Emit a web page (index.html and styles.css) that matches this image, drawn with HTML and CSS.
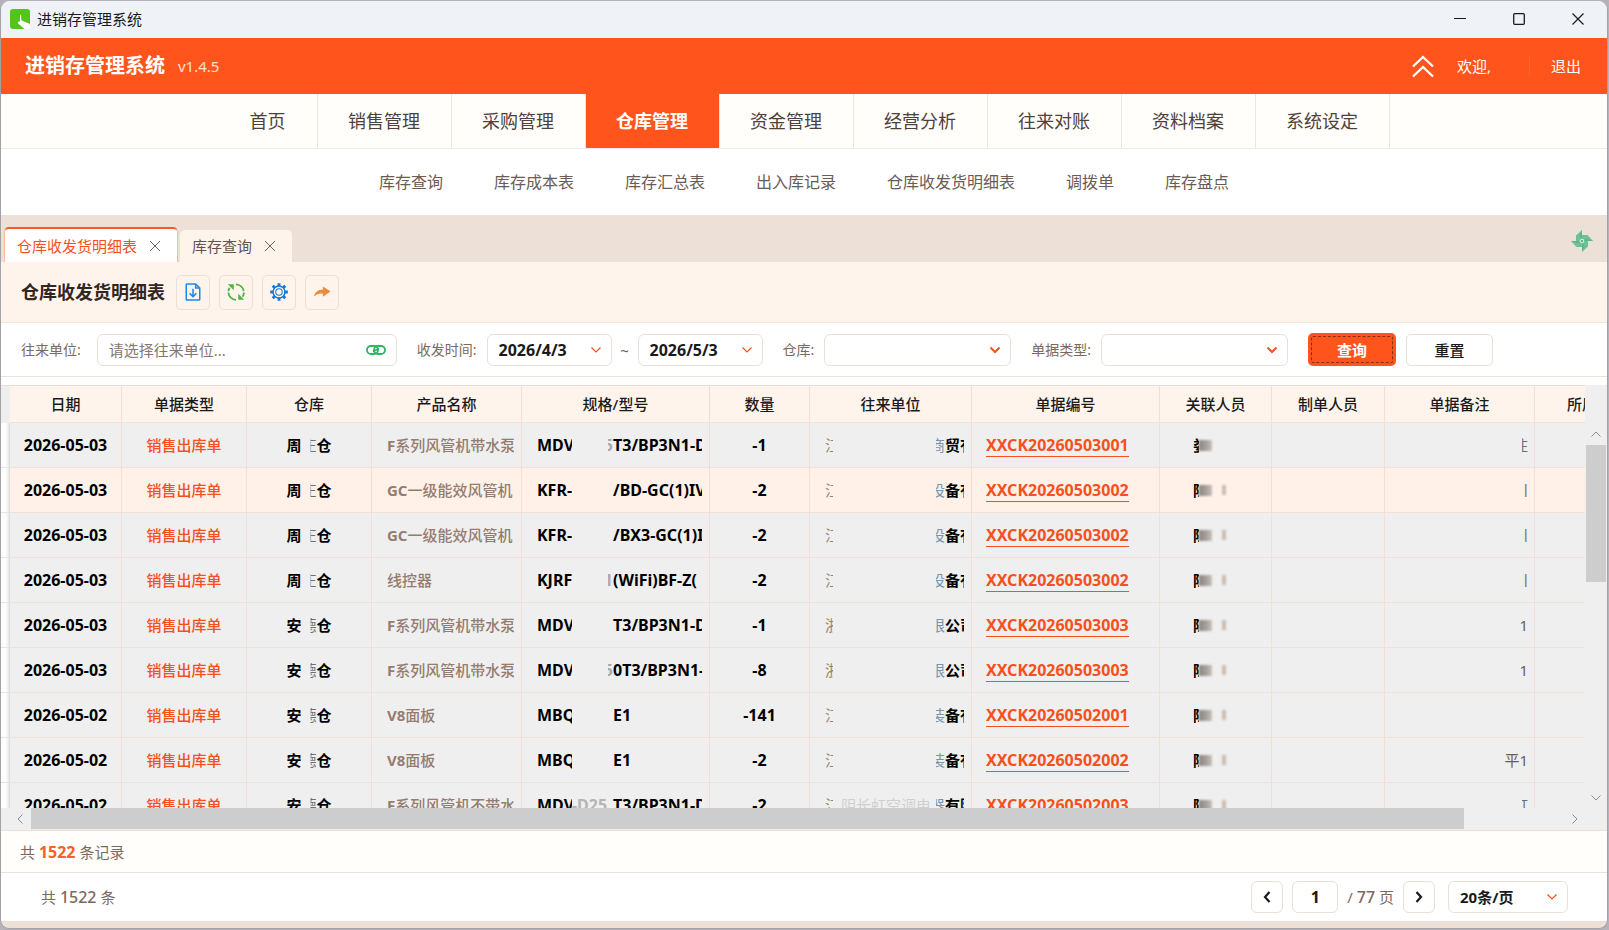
FILE: index.html
```html
<!DOCTYPE html>
<html lang="zh-CN">
<head>
    <meta charset="UTF-8">
    <meta name="viewport" content="width=device-width, initial-scale=1.0">
    <title>进销存管理系统</title>
    <link rel="stylesheet" href="styles.css">
</head>
<body>
    <!-- 公用箭头 -->
    <svg class="sprite" aria-hidden="true">
        <symbol id="arrow-down" viewBox="0 0 12 8"><path d="M1.5 1.5 6 6l4.500-4.500" fill="none" stroke="currentColor"/></symbol>
        <symbol id="close" viewBox="0 0 12 12"><path d="M1 1l10 10M11 1 1 11" fill="none" stroke="currentColor"/></symbol>
    </svg>
    <div class="window">
        <div class="title-bar">
            <svg class="app-icon" viewBox="0 0 20 20">
                <rect width="20" height="20" rx="3" fill="#52c41a"/>
                <path d="M10 6c.6-.5 1.200 0 1.200.6V11l1.600 1 5.500 2.200c1 .4 1.700 1 1.700 2V20h-5.500l-5-4.200c-1.300-.9-2-2.300-1.200-3 .5-.4 1.200-.2 1.700.2z" fill="#fff"/>
            </svg>
            <span class="app-name">进销存管理系统</span>
            <div class="window-btns">
                <button type="button" aria-label="最小化"><svg viewBox="0 0 12 12"><path d="M0 5.500h12" stroke="currentColor"/></svg></button>
                <button type="button" aria-label="最大化"><svg viewBox="0 0 12 12"><rect x=".7" y=".7" width="10.600" height="10.600" rx="1" fill="none" stroke="currentColor" stroke-width="1.300"/></svg></button>
                <button type="button" aria-label="关闭"><svg viewBox="0 0 12 12"><path d="M.5.5l11 11M11.500.5l-11 11" stroke="currentColor" stroke-width="1.200"/></svg></button>
            </div>
        </div>

        <header class="header">
            <h1 class="logo">进销存管理系统</h1>
            <span class="version">v1.4.5</span>
            <div class="user">
                <button type="button" class="collapse" aria-label="收起菜单">
                    <svg viewBox="0 0 22 23"><path d="M1 11.500 11 2l10 9.500M1 21.500 11 12l10 9.500" fill="none" stroke="#fff" stroke-width="2.300"/></svg>
                </button>
                <span class="welcome">欢迎,</span>
                <a class="logout" href="#">退出</a>
            </div>
        </header>

        <nav class="nav">
            <a class="home" href="#">首页</a>
            <a href="#">销售管理</a>
            <a href="#">采购管理</a>
            <a class="active" href="#">仓库管理</a>
            <a href="#">资金管理</a>
            <a href="#">经营分析</a>
            <a href="#">往来对账</a>
            <a href="#">资料档案</a>
            <a href="#">系统设定</a>
        </nav>
        <nav class="sub-nav">
            <a href="#">库存查询</a>
            <a href="#">库存成本表</a>
            <a href="#">库存汇总表</a>
            <a href="#">出入库记录</a>
            <a href="#">仓库收发货明细表</a>
            <a href="#">调拨单</a>
            <a href="#">库存盘点</a>
        </nav>

        <div class="tabs">
            <div class="tab active">
                <span>仓库收发货明细表</span>
                <button type="button" aria-label="关闭"><svg><use href="#close"/></svg></button>
            </div>
            <div class="tab">
                <span>库存查询</span>
                <button type="button" aria-label="关闭"><svg><use href="#close"/></svg></button>
            </div>
            <svg class="pinwheel" viewBox="0 0 22 22">
                <g fill="#6fc094">
                    <path d="M11 11V0L5 5.500V11z"/>
                    <path d="M11 11h11l-5.500-6H11z"/>
                    <path d="M11 11v11l6-5.500V11z"/>
                    <path d="M11 11H0l5.500 6H11z"/>
                </g>
                <g fill="#5cb887">
                    <path d="M11 11V0L8.500 6z"/>
                    <path d="M11 11h11l-6-2.500z"/>
                    <path d="M11 11v11l2.500-6z"/>
                    <path d="M11 11H0l6 2.500z"/>
                </g>
                <circle cx="11" cy="11" r="1.800" fill="#57b383" stroke="#e6f3ea"/>
            </svg>
        </div>

        <div class="toolbar">
            <h2>仓库收发货明细表</h2>
            <button type="button" aria-label="导出">
                <svg viewBox="0 0 20 20" fill="none" stroke="#1e88e5" stroke-width="1.700"><path d="M3.500 1H13l4.500 4.500V18a1 1 0 0 1-1 1h-13a1 1 0 0 1-1-1V2a1 1 0 0 1 1-1z"/><path d="M13 1v4.500h4.500M10 6.500v8.500M6.300 11.500 10 15.200l3.700-3.700"/></svg>
            </button>
            <button type="button" aria-label="刷新">
                <svg viewBox="0 0 20 20" fill="none" stroke="#4bb543" stroke-width="2"><path d="M10 1.500c4.500.2 8 3.200 8.600 7.500M18.800 10.500c0 1.800-.6 3.400-1.600 4.800M10 18.800C5.500 18.500 1.800 15 1.500 10.500M1.500 9c.2-1.300.7-2.500 1.500-3.600"/><path d="M1 1.500h6.500V8zM19 18.500h-6.500V12z" fill="#4bb543" stroke="none"/></svg>
            </button>
            <button type="button" aria-label="设置">
                <svg viewBox="0 0 20 20" fill="none" stroke="#1976d2"><circle cx="10" cy="10" r="6.600" stroke-width="1.600"/><circle cx="10" cy="10" r="3.600" stroke-width="1.200"/><path d="M10 .2V3.500M10 16.500v3.300M.2 10h3.300M16.500 10h3.300M3 3l2.300 2.300M14.700 14.700 17 17M3 17l2.300-2.300M14.700 5.300 17 3" stroke-width="3.200"/></svg>
            </button>
            <button type="button" aria-label="转到">
                <svg viewBox="0 0 20 20"><path d="M1 15c1.500-5.500 5-7.500 10-7.500V3.800L19.500 9.500 11 15.200v-3.400C7 11.300 4 12.500 1 15z" fill="#e98b3d"/></svg>
            </button>
        </div>

        <form class="filter">
            <label class="wide-label" for="unit">往来单位:</label>
            <div class="field field-unit">
                <input type="text" id="unit" placeholder="请选择往来单位...">
                <svg class="link-icon" viewBox="0 0 20 10" fill="none" stroke="#27b862" stroke-width="1.800"><rect x="1" y="1" width="11" height="8" rx="4"/><rect x="8" y="1" width="11" height="8" rx="4"/><path d="M7 6.500l6-3"/></svg>
            </div>
            <label for="date-from">收发时间:</label>
            <div class="field field-date">
                <input class="num" type="text" id="date-from" value="2026/4/3">
                <svg class="arrow"><use href="#arrow-down"/></svg>
            </div>
            <span class="tilde">~</span>
            <div class="field field-date">
                <input class="num" type="text" id="date-to" aria-label="结束时间" value="2026/5/3">
                <svg class="arrow"><use href="#arrow-down"/></svg>
            </div>
            <label for="store">仓库:</label>
            <div class="field field-select">
                <select id="store"><option></option></select>
                <svg class="arrow bold"><use href="#arrow-down"/></svg>
            </div>
            <label for="type">单据类型:</label>
            <div class="field field-select">
                <select id="type"><option></option></select>
                <svg class="arrow bold"><use href="#arrow-down"/></svg>
            </div>
            <button type="button" class="btn btn-primary">查询</button>
            <button type="reset" class="btn">重置</button>
        </form>

        <div class="grid">
            <div class="grid-view">
                <table>
                    <colgroup>
                        <col class="w-gutter"><col class="w-112"><col class="w-125"><col class="w-125"><col class="w-150"><col class="w-188"><col class="w-100"><col class="w-162"><col class="w-188"><col class="w-112"><col class="w-113"><col class="w-150"><col class="w-125">
                    </colgroup>
                    <thead>
                        <tr><td class="gutter"></td><th>日期</th><th>单据类型</th><th>仓库</th><th>产品名称</th><th>规格/型号</th><th>数量</th><th>往来单位</th><th>单据编号</th><th>关联人员</th><th>制单人员</th><th>单据备注</th><th>所属部门</th></tr>
                    </thead>
                    <tbody>
                        <tr>
                            <td class="gutter"></td><td class="num">2026-05-03</td><td class="type">销售出库单</td><td class="store">周<i>庄</i>仓</td>
                            <td class="name"><div class="clip"><b>F</b>系列风管机带水泵</div></td>
                            <td class="num"><div class="clip model"><span>MDV</span><i></i><em>5</em>T3/BP3N1-D</div></td>
                            <td class="num">-1</td>
                            <td class="store"><div class="clip unit"><span>江</span><i></i><em>商</em>贸有</div></td>
                            <td class="num doc"><a href="#">XXCK20260503001</a></td>
                            <td><div class="person"><span>娄</span><i></i></div></td><td></td><td class="remark"><i>住</i></td><td></td>
                        </tr>
                        <tr class="selected">
                            <td class="gutter"></td><td class="num">2026-05-03</td><td class="type">销售出库单</td><td class="store">周<i>庄</i>仓</td>
                            <td class="name"><div class="clip"><b>GC</b>一级能效风管机</div></td>
                            <td class="num"><div class="clip model"><span>KFR-</span><i></i><em></em>/BD-GC(1)IV</div></td>
                            <td class="num">-2</td>
                            <td class="store"><div class="clip unit"><span>江</span><i></i><em>设</em>备有</div></td>
                            <td class="num doc"><a href="#">XXCK20260503002</a></td>
                            <td><div class="person"><span>陈</span><i></i><b></b></div></td><td></td><td class="remark"><i>川</i></td><td></td>
                        </tr>
                        <tr>
                            <td class="gutter"></td><td class="num">2026-05-03</td><td class="type">销售出库单</td><td class="store">周<i>庄</i>仓</td>
                            <td class="name"><div class="clip"><b>GC</b>一级能效风管机</div></td>
                            <td class="num"><div class="clip model"><span>KFR-</span><i></i><em></em>/BX3-GC(1)IV</div></td>
                            <td class="num">-2</td>
                            <td class="store"><div class="clip unit"><span>江</span><i></i><em>设</em>备有</div></td>
                            <td class="num doc"><a href="#">XXCK20260503002</a></td>
                            <td><div class="person"><span>陈</span><i></i><b></b></div></td><td></td><td class="remark"><i>川</i></td><td></td>
                        </tr>
                        <tr>
                            <td class="gutter"></td><td class="num">2026-05-03</td><td class="type">销售出库单</td><td class="store">周<i>庄</i>仓</td>
                            <td class="name"><div class="clip">线控器</div></td>
                            <td class="num"><div class="clip model"><span>KJRF</span><i></i><em>1</em>(WiFi)BF-Z(</div></td>
                            <td class="num">-2</td>
                            <td class="store"><div class="clip unit"><span>江</span><i></i><em>设</em>备有</div></td>
                            <td class="num doc"><a href="#">XXCK20260503002</a></td>
                            <td><div class="person"><span>陈</span><i></i><b></b></div></td><td></td><td class="remark"><i>川</i></td><td></td>
                        </tr>
                        <tr>
                            <td class="gutter"></td><td class="num">2026-05-03</td><td class="type">销售出库单</td><td class="store">安<i>德</i>仓</td>
                            <td class="name"><div class="clip"><b>F</b>系列风管机带水泵</div></td>
                            <td class="num"><div class="clip model"><span>MDV</span><i></i><em></em>T3/BP3N1-D</div></td>
                            <td class="num">-1</td>
                            <td class="store"><div class="clip unit"><span>浙</span><i></i><em>限</em>公司</div></td>
                            <td class="num doc"><a href="#">XXCK20260503003</a></td>
                            <td><div class="person"><span>陈</span><i></i><b></b></div></td><td></td><td class="remark">1</td><td></td>
                        </tr>
                        <tr>
                            <td class="gutter"></td><td class="num">2026-05-03</td><td class="type">销售出库单</td><td class="store">安<i>德</i>仓</td>
                            <td class="name"><div class="clip"><b>F</b>系列风管机带水泵</div></td>
                            <td class="num"><div class="clip model"><span>MDV</span><i></i><em>5</em>0T3/BP3N1-</div></td>
                            <td class="num">-8</td>
                            <td class="store"><div class="clip unit"><span>浙</span><i></i><em>限</em>公司</div></td>
                            <td class="num doc"><a href="#">XXCK20260503003</a></td>
                            <td><div class="person"><span>陈</span><i></i><b></b></div></td><td></td><td class="remark">1</td><td></td>
                        </tr>
                        <tr>
                            <td class="gutter"></td><td class="num">2026-05-02</td><td class="type">销售出库单</td><td class="store">安<i>德</i>仓</td>
                            <td class="name"><div class="clip"><b>V8</b>面板</div></td>
                            <td class="num"><div class="clip model"><span>MBQ</span><i></i><em></em>E1</div></td>
                            <td class="num">-141</td>
                            <td class="store"><div class="clip unit"><span>江</span><i></i><em>装</em>备有</div></td>
                            <td class="num doc"><a href="#">XXCK20260502001</a></td>
                            <td><div class="person"><span>陈</span><i></i><b></b></div></td><td></td><td class="remark"></td><td></td>
                        </tr>
                        <tr>
                            <td class="gutter"></td><td class="num">2026-05-02</td><td class="type">销售出库单</td><td class="store">安<i>德</i>仓</td>
                            <td class="name"><div class="clip"><b>V8</b>面板</div></td>
                            <td class="num"><div class="clip model"><span>MBQ</span><i></i><em></em>E1</div></td>
                            <td class="num">-2</td>
                            <td class="store"><div class="clip unit"><span>江</span><i></i><em>装</em>备有</div></td>
                            <td class="num doc"><a href="#">XXCK20260502002</a></td>
                            <td><div class="person"><span>陈</span><i></i><b></b></div></td><td></td><td class="remark">平1</td><td></td>
                        </tr>
                        <tr>
                            <td class="gutter"></td><td class="num">2026-05-02</td><td class="type">销售出库单</td><td class="store">安<i>德</i>仓</td>
                            <td class="name"><div class="clip"><b>F</b>系列风管机不带水</div></td>
                            <td class="num"><div class="clip model"><span>MDV</span><i>-D25</i><em></em>T3/BP3N1-D</div></td>
                            <td class="num">-2</td>
                            <td class="store"><div class="clip unit"><span>江</span><i>阴长虹空调电</i><em>器</em>有限</div></td>
                            <td class="num doc"><a href="#">XXCK20260502003</a></td>
                            <td><div class="person"><span>陈</span><i></i><b></b></div></td><td></td><td class="remark"><i>订</i></td><td></td>
                        </tr>
                    </tbody>
                </table>
            </div>
            <div class="scroll-y">
                <svg class="up"><use href="#arrow-down"/></svg>
                <div class="thumb"></div>
                <svg class="down"><use href="#arrow-down"/></svg>
            </div>
            <div class="scroll-x">
                <svg class="left"><use href="#arrow-down"/></svg>
                <div class="track"><div class="thumb"></div></div>
                <svg class="right"><use href="#arrow-down"/></svg>
            </div>
        </div>

        <div class="records">共 <b>1522</b> 条记录</div>

        <div class="pager">
            <span class="total">共 <span>1522</span> 条</span>
            <button type="button" aria-label="上一页"><svg viewBox="0 0 8 12"><path d="M6.500 1 2 6l4.500 5" fill="none" stroke="currentColor" stroke-width="2.200"/></svg></button>
            <input class="num" type="text" value="1" aria-label="页码">
            <span class="pages">/ <span>77</span> 页</span>
            <button type="button" aria-label="下一页"><svg viewBox="0 0 8 12"><path d="M1.500 1 6 6l-4.500 5" fill="none" stroke="currentColor" stroke-width="2.200"/></svg></button>
            <div class="field field-size">
                <select aria-label="每页条数"><option>20条/页</option></select>
                <svg class="arrow"><use href="#arrow-down"/></svg>
            </div>
        </div>
    </div>
</body>
</html>
```
FILE: styles.css
```css
* {
    box-sizing: border-box;
}
body {
    margin: 0;
    height: 100vh;
    padding: 1px 1px 1px 0;
    background: #b5b2ba;
    font: 15px/20px "Noto Sans", "Noto Sans CJK SC", sans-serif;
    color: #1a1a1a;
    overflow: hidden;
}
a {
    color: inherit;
    text-decoration: none;
}
button,
input,
select {
    font: inherit;
    color: inherit;
    margin: 0;
    padding: 0;
}
button {
    border: 0;
    background: none;
    cursor: pointer;
}
.sprite {
    display: none;
}
.window {
    height: 100%;
    display: flex;
    flex-direction: column;
    border: 1px solid #a3a1a8;
    border-top: 0;
    border-radius: 9px;
    background: #ede0d6;
    padding-bottom: 7px;
    overflow: hidden;
}

/* 窗口标题栏 */
.title-bar {
    flex: none;
    height: 37px;
    display: flex;
    align-items: center;
    padding: 0 0 1px 9px;
    background: #eff3f8;
}
.app-icon {
    width: 20px;
    height: 20px;
    margin-right: 7px;
}
.window-btns {
    margin-left: auto;
    display: flex;
}
.window-btns button {
    width: 59px;
    height: 36px;
}
.window-btns svg {
    width: 12px;
    height: 12px;
    display: block;
    margin: 0 auto;
}

/* 顶部 */
.header {
    flex: none;
    height: 56px;
    display: flex;
    align-items: center;
    padding: 0 26px 0 24px;
    background: #ff551d;
    color: #fff;
}
.logo {
    margin: 0 13px 0 0;
    font-size: 20px;
    line-height: 26px;
}
.version {
    color: #ffe0d4;
}
.user {
    margin-left: auto;
    display: flex;
    align-items: center;
}
.collapse svg {
    width: 22px;
    height: 23px;
    display: block;
}
.welcome {
    margin-left: 23px;
    padding-right: 38px;
    border-right: 1px solid #f7642f;
}
.logout {
    margin-left: 21px;
}

/* 菜单 */
.nav {
    flex: none;
    height: 55px;
    display: flex;
    justify-content: center;
    background: #fffefa;
    border-bottom: 1px solid #efebe8;
    font-size: 18px;
    line-height: 54px;
    color: #4f4039;
}
.nav a {
    width: 134px;
    text-align: center;
    border-right: 1px solid #ede5de;
}
.nav .home {
    width: 99px;
}
.nav .active {
    background: #ff551d;
    color: #fff;
    font-weight: bold;
}
.sub-nav {
    flex: none;
    height: 66px;
    display: flex;
    justify-content: center;
    gap: 51px;
    background: #fff;
    font-size: 16px;
    line-height: 66px;
    color: #6b5b54;
}

/* 页签 */
.tabs {
    flex: none;
    height: 47px;
    display: flex;
    align-items: flex-end;
    gap: 2px;
    padding-left: 3px;
    color: #65544b;
}
.tab {
    height: 32px;
    display: flex;
    align-items: center;
    gap: 12px;
    padding: 0 16px 0 12px;
    background: #fff4ec;
    border-radius: 5px 5px 0 0;
}
.tab.active {
    height: 35px;
    background: #fff;
    border: 1px solid #fbb9a0;
    border-top: 2px solid #ff5a24;
    border-bottom: 0;
    color: #f4511e;
}
.tab button {
    width: 12px;
    height: 12px;
    color: #6b625e;
}
.tab svg {
    width: 12px;
    height: 12px;
    display: block;
}
.pinwheel {
    width: 22px;
    height: 22px;
    margin: 0 14px 10px auto;
}

/* 工具栏 */
.toolbar {
    flex: none;
    height: 61px;
    display: flex;
    align-items: center;
    gap: 9px;
    padding-left: 20px;
    background: #fff4ec;
    border-bottom: 1px solid #f0e6de;
}
.toolbar h2 {
    margin: 0 2px 0 0;
    font-size: 18px;
    line-height: 24px;
    color: #33261f;
}
.toolbar button {
    width: 34px;
    height: 35px;
    border: 1px solid #eedfd5;
    border-radius: 5px;
}
.toolbar svg {
    width: 18px;
    height: 20px;
    display: block;
    margin: 0 auto;
}

/* 查询条件 */
.filter {
    flex: none;
    height: 54px;
    display: flex;
    align-items: center;
    padding-left: 20px;
    background: #fff;
    border-bottom: 1px solid #eae3dd;
}
.filter label {
    flex: none;
    font-size: 14px;
    color: #7c695e;
    margin-right: 10px;
}
.filter .wide-label {
    margin-right: 16px;
}
.field {
    position: relative;
    height: 32px;
    margin-right: 20px;
}
.field input,
.field select {
    width: 100%;
    height: 32px;
    padding: 0 11px;
    border: 1px solid #e8e0da;
    border-radius: 6px;
    background: #fff;
    appearance: none;
    outline: none;
}
.field-unit {
    width: 300px;
}
.field-unit input::placeholder {
    color: #85776f;
    opacity: 1;
}
.link-icon {
    position: absolute;
    right: 11px;
    top: 11px;
    width: 20px;
    height: 10px;
}
.field-date {
    width: 125px;
}
.field-select {
    width: 187px;
}
.arrow {
    position: absolute;
    right: 10px;
    top: 12px;
    width: 12px;
    height: 8px;
    color: #f4511e;
    stroke-width: 1.2;
    pointer-events: none;
}
.arrow.bold {
    stroke-width: 2;
}
.tilde {
    width: 26px;
    margin-left: -20px;
    text-align: center;
    color: #6b5b54;
}
.num {
    font-size: 16px;
    font-weight: bold;
}
.btn {
    width: 87px;
    height: 32px;
    border: 1px solid #e8e0da;
    border-radius: 5px;
    background: #fff;
    font-weight: 500;
}
.btn-primary {
    width: 88px;
    height: 33px;
    margin-right: 10px;
    border: 0;
    background: #ff551d;
    color: #fff;
    font-weight: bold;
    outline: 1px dashed #8a2a0a;
    outline-offset: -4px;
}

/* 表格 */
.grid {
    flex: 1;
    min-height: 0;
    display: grid;
    grid-template-columns: minmax(0, 1fr) 22px;
    grid-template-rows: minmax(0, 1fr) 22px;
    border-top: 8px solid #fff;
    background: #efefef;
}
.grid-view {
    overflow: hidden;
    border-top: 1px solid #e6ddd7;
}
table {
    width: 1659px;
    table-layout: fixed;
    border-collapse: separate;
    border-spacing: 0;
}
.w-gutter {
    width: 9px;
}
.w-100 {
    width: 100px;
}
.w-112 {
    width: 112px;
}
.w-113 {
    width: 113px;
}
.w-125 {
    width: 125px;
}
.w-150 {
    width: 150px;
}
.w-162 {
    width: 162px;
}
.w-188 {
    width: 188px;
}
th,
td {
    padding: 0;
    text-align: center;
    white-space: nowrap;
    border-right: 1px solid #f3dfd2;
    border-bottom: 1px solid #f1e2d9;
}
th {
    height: 37px;
    background: #fff4ec;
    font-weight: 500;
}
td {
    height: 45px;
    background: #efefef;
    color: #000;
}
.selected td {
    background: #fff1e8;
}
tbody .gutter,
.selected .gutter {
    background: linear-gradient(90deg, #fdfdfd 60%, #e8e8e8);
    border-right-color: #dcdcdc;
    border-bottom-color: #e4e4e4;
}
thead .gutter {
    height: 37px;
    border: 0;
}
.type {
    color: #f4511e;
    font-weight: 500;
}
td.name {
    color: #957c70;
    font-weight: 500;
}
.store {
    font-weight: 600;
}
.doc {
    padding-left: 14px;
    text-align: left;
}
/* 打码文字:只留字的右侧 */
.store > i,
.remark i {
    display: inline-block;
    font-style: normal;
    font-weight: normal;
    color: #6f6f6f;
    clip-path: inset(0 0 0 9px);
}
.clip {
    margin: 0 7px 0 15px;
    text-align: left;
    overflow: hidden;
}
.model,
.unit {
    display: flex;
}
.clip span,
.clip i,
.clip em {
    flex: none;
    overflow: hidden;
    font-style: normal;
}
.model span {
    width: 35px;
}
.model i {
    width: 36px;
    color: #b5b5b5;
}
.model em {
    width: 5px;
    color: #aaa;
    direction: rtl;
}
.unit span {
    width: 8px;
    color: #9a8468;
    font-weight: normal;
}
.unit i {
    width: 103px;
    padding-left: 8px;
    color: #cfcfcf;
    font-weight: normal;
}
.unit em {
    width: 9px;
    color: #7893aa;
    font-weight: normal;
    direction: rtl;
}
td a {
    color: #f4511e;
    border-bottom: 1px solid #f4511e;
}
.person {
    width: 45px;
    margin: 0 auto;
    display: flex;
    align-items: center;
}
.person span {
    width: 6px;
    overflow: hidden;
    font-weight: bold;
}
.person i {
    width: 13px;
    height: 11px;
    background: linear-gradient(90deg, #8a8480, #a9a39e 60%, #c9c3bd);
    filter: blur(1px);
}
.person b {
    width: 4px;
    height: 10px;
    margin-left: 10px;
    background: #c9bdb3;
    filter: blur(1px);
}
.remark {
    padding-right: 6px;
    text-align: right;
    color: #6b6058;
}

/* 滚动条 */
.scroll-y {
    display: flex;
    flex-direction: column;
    align-items: center;
    padding-top: 45px;
    color: #8a8a8a;
}
.scroll-y svg,
.scroll-x svg {
    flex: none;
    width: 12px;
    height: 8px;
}
.up {
    transform: rotate(180deg);
}
.scroll-y .thumb {
    width: 20px;
    height: 137px;
    margin-top: 7px;
    background: #cdcdcd;
}
.down {
    margin: auto 0 6px;
}
.scroll-x {
    grid-column: 1 / 3;
    display: flex;
    align-items: center;
    padding: 0 26px 0 13px;
    color: #8a8a8a;
}
.left {
    transform: rotate(90deg);
}
.right {
    transform: rotate(-90deg);
}
.track {
    flex: 1;
    padding: 0 105px 1px 5px;
}
.scroll-x .thumb {
    height: 21px;
    background: #cdcdcd;
}

/* 底部 */
.records {
    flex: none;
    height: 43px;
    padding-left: 19px;
    border-top: 1px solid #efdfd5;
    border-bottom: 1px solid #e6e2df;
    background: #fffefa;
    line-height: 42px;
    color: #7c695e;
}
.records b {
    font-size: 16px;
    color: #f4622a;
}
.pager {
    flex: none;
    height: 48px;
    display: flex;
    align-items: center;
    padding: 0 19px 0 40px;
    background: #fff;
    color: #7c695e;
}
.pager .total {
    margin-right: auto;
}
.total span,
.pages span {
    font-size: 16px;
    font-weight: 500;
}
.pager button,
.pager > input {
    width: 32px;
    height: 32px;
    border: 1px solid #e8e0da;
    border-radius: 6px;
    background: #fff;
    color: #1a1a1a;
}
.pager > input {
    width: 46px;
    margin: 0 9px;
    text-align: center;
}
.pager button svg {
    width: 8px;
    height: 12px;
    display: block;
    margin: 0 auto;
}
.pages {
    margin-right: 9px;
}
.field-size {
    width: 120px;
    margin-left: 13px;
    color: #1a1a1a;
    font-weight: bold;
}
```
